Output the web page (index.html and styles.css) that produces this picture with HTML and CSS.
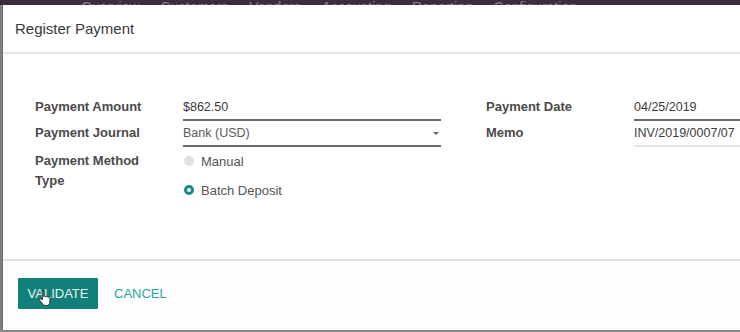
FILE: index.html
```html
<!DOCTYPE html>
<html>
<head>
<meta charset="utf-8">
<link rel="stylesheet" href="styles.css">
</head>
<body>
<div class="backdrop">
  <div class="nav">
    <span class="nav-brand">ng</span>
    <span class="nav-item">Overview</span>
    <span class="nav-item">Customers</span>
    <span class="nav-item">Vendors</span>
    <span class="nav-item">Accounting</span>
    <span class="nav-item">Reporting</span>
    <span class="nav-item">Configuration</span>
  </div>
  <div class="modal">
    <div class="modal-header">Register Payment</div>
    <div class="modal-body">
      <div class="group">
        <div class="label">Payment Amount</div>
        <div class="field field-dark">$862.50</div>
        <div class="label">Payment Journal</div>
        <div class="field field-dark select">Bank (USD)<span class="caret"></span></div>
        <div class="label label-multi">Payment Method Type</div>
        <div class="radios">
          <div class="radio-row"><span class="radio radio-off"></span>Manual</div>
          <div class="radio-row"><span class="radio radio-on"></span>Batch Deposit</div>
        </div>
      </div>
      <div class="group group-right">
        <div class="label">Payment Date</div>
        <div class="field field-dark">04/25/2019</div>
        <div class="label">Memo</div>
        <div class="field field-light">INV/2019/0007/07</div>
      </div>
    </div>
    <div class="modal-footer">
      <button class="btn btn-primary">VALIDATE
        <svg class="cursor" width="12" height="16" viewBox="0 0 12 16"><path d="M3.5 1.2c.7 0 1.2.5 1.2 1.2v4.3c.2-.4.6-.6 1-.6.6 0 1 .4 1.1.9.2-.3.6-.5 1-.5.6 0 1 .4 1.1.9.2-.2.5-.3.8-.3.7 0 1.2.5 1.2 1.2v3.6c0 2.2-1.6 3.6-3.7 3.6H6.3c-1.2 0-2-.5-2.7-1.4L.9 10.5c-.4-.5-.3-1.2.2-1.6.5-.4 1.2-.3 1.6.2l.6.8V2.4c0-.7.5-1.2 1.2-1.2z" fill="#fff" stroke="#222" stroke-width="0.9"/></svg>
      </button>
      <button class="btn btn-link">CANCEL</button>
    </div>
  </div>
</div>
</body>
</html>
```

FILE: styles.css
```css
html, body {
  margin: 0;
  padding: 0;
}
body {
  width: 740px;
  height: 332px;
  overflow: hidden;
  background: #7d7d7d;
  font-family: "Liberation Sans", Arial, sans-serif;
}
.backdrop {
  height: 332px;
  display: flex;
  flex-direction: column;
  border-bottom: 2px solid #8a8a8a;
  box-sizing: border-box;
}
.nav {
  height: 5px;
  flex: none;
  background: #3e2b3b;
  overflow: hidden;
  display: flex;
  align-items: flex-end;
  color: #8f818d;
  font-size: 14px;
  white-space: nowrap;
}
.nav-brand, .nav-item {
  display: block;
  line-height: 14px;
  margin-bottom: -9px;
}
.nav-brand {
  margin-left: 47px;
  font-size: 20px;
  margin-bottom: -11px;
}
.nav-brand + .nav-item { margin-left: 12px; }
.nav-item + .nav-item { margin-left: 21px; }
.modal {
  flex: 1;
  margin-left: 3px;
  background: #fff;
  display: flex;
  flex-direction: column;
  box-shadow: -1px 0 0 #6d6d6d;
}
.modal-header {
  height: 49px;
  flex: none;
  box-sizing: border-box;
  padding: 0 0 0 12px;
  display: flex;
  align-items: center;
  font-size: 15px;
  color: #3a3a3a;
  border-bottom: 2px solid #e3e5e8;
}
.modal-body {
  height: 207px;
  flex: none;
  box-sizing: border-box;
  padding: 41px 0 0 32px;
  display: flex;
  gap: 45px;
  border-bottom: 2px solid #dcdfe3;
}
.group {
  display: grid;
  grid-template-columns: 148px 258px;
  grid-auto-rows: min-content;
  row-gap: 0;
  align-items: start;
}
.group-right {
  grid-template-columns: 148px 120px;
}
.label {
  font-size: 13px;
  font-weight: bold;
  color: #4a4a4a;
  line-height: 24px;
}
.label-multi {
  line-height: 20px;
  width: 110px;
  padding-top: 4px;
}
.field {
  height: 24px;
  line-height: 24px;
  font-size: 12.5px;
  color: #3c3c3c;
  position: relative;
  white-space: nowrap;
}
.field-dark { border-bottom: 2px solid #6a6a6a; }
.field-light { border-bottom: 2px solid #e4e4e4; }
.select { color: #5a5a5a; }
.caret {
  position: absolute;
  right: 2px;
  top: 11px;
  border-left: 3px solid transparent;
  border-right: 3px solid transparent;
  border-top: 3px solid #666;
}
.radios {
  display: flex;
  flex-direction: column;
  gap: 3px;
  padding-top: 1px;
}
.radio-row {
  display: flex;
  align-items: center;
  gap: 7px;
  font-size: 13px;
  color: #555;
  height: 26px;
}
.radio {
  width: 10px;
  height: 10px;
  border-radius: 50%;
  box-sizing: border-box;
  margin-left: 1px;
}
.radio-off { background: #dfe1e4; }
.radio-on {
  background: #fff;
  border: 3px solid #0f8a86;
}
.modal-footer {
  flex: 1;
  display: flex;
  align-items: flex-start;
  padding: 17px 0 0 15px;
  background: #fdfdfd;
}
.btn {
  font-family: "Liberation Sans", Arial, sans-serif;
  font-size: 13px;
  border: none;
  height: 31px;
  cursor: pointer;
  padding: 0;
}
.btn-primary {
  width: 80px;
  background: #12807a;
  color: #e8f4f3;
  border-radius: 1px;
  position: relative;
}
.btn-link {
  background: transparent;
  color: #2aa6a1;
  margin-left: 16px;
}
.cursor {
  position: absolute;
  left: 21px;
  top: 12px;
}
```
